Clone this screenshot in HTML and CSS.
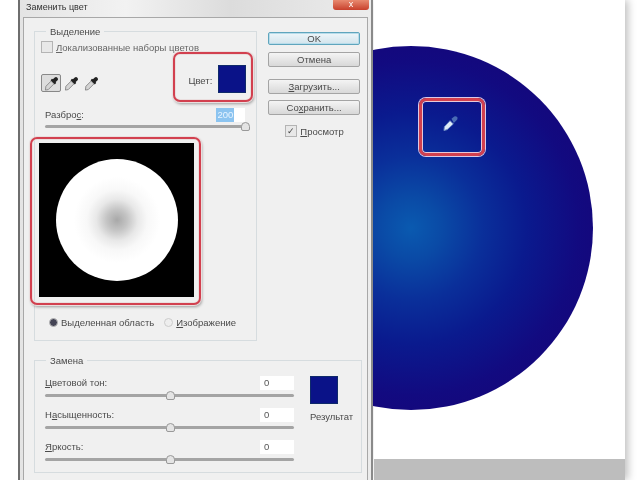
FILE: index.html
```html
<!DOCTYPE html>
<html lang="ru">
<head>
    <meta charset="UTF-8">
    <title>Заменить цвет</title>
    <link rel="stylesheet" href="styles.css">
</head>
<body>
    <svg width="0" height="0" class="defs">
        <symbol id="dropper" viewBox="0 0 16 16">
            <path d="M9.500 3.500L11.500 1.500Q13 0.500 14.500 2Q15.500 3.500 14.500 4.500L12.500 6.500L13 7.500L11.500 9L7 4.500L8.500 3z" fill="#222"/>
            <path d="M7.500 5.500L10.500 8.500L4.500 14.500L1.500 15L2 11z" fill="#d4d4d4" stroke="#888" stroke-width="1"/>
        </symbol>
        <symbol id="cursor-dropper" viewBox="0 0 16 16">
            <path d="M9 3L12 0.500Q14 0 15.500 1.500Q16 3.500 14 5L11.500 7.500z" fill="#4a6cb4"/>
            <path d="M7.500 5L11 8.500L4.500 14.500L1 15.500L1.500 11.500z" fill="#dfeaf6" stroke="#6f8fc8" stroke-width="1"/>
        </symbol>
    </svg>

    <div class="desktop">
        <div class="canvas">
            <div class="circle"></div>
            <div class="band"></div>
        </div>
        <svg class="cursor" width="15" height="15"><use href="#cursor-dropper"/></svg>
        <div class="callout callout-cursor"></div>

        <div class="dialog">
            <div class="titlebar">
                <span>Заменить цвет</span>
                <div class="close">x</div>
            </div>
            <div class="panel">
                <div class="top">
                    <fieldset class="group group-select">
                        <legend>Выделение</legend>
                        <label class="check check-local"><i class="box"></i><span><u>Л</u>окализованные наборы цветов</span></label>
                        <div class="tools">
                            <div class="droppers">
                                <div class="tool active"><svg width="15" height="15"><use href="#dropper"/></svg></div>
                                <div class="tool"><svg width="15" height="15"><use href="#dropper"/></svg></div>
                                <div class="tool"><svg width="15" height="15"><use href="#dropper"/></svg></div>
                            </div>
                            <div class="color">
                                <span>Цвет:</span>
                                <div class="swatch"></div>
                            </div>
                        </div>
                        <div class="field-row">
                            <span>Разбро<u>с</u>:</span>
                            <div class="value value-fuzz"><b>200</b></div>
                        </div>
                        <div class="slider"><i class="thumb" style="left:100%"></i></div>
                        <div class="preview"><div class="preview-circle"></div></div>
                        <div class="radios">
                            <label class="radio"><i class="dot on"></i><span>Выделенная область</span></label>
                            <label class="radio"><i class="dot"></i><span><u>И</u>зображение</span></label>
                        </div>
                    </fieldset>
                    <div class="buttons">
                        <div class="btn btn-default">OK</div>
                        <div class="btn">Отмена</div>
                        <div class="btn btn-gap"><u>З</u>агрузить...</div>
                        <div class="btn">Со<u>х</u>ранить...</div>
                        <label class="check check-preview"><i class="box box-on">✓</i><span><u>П</u>росмотр</span></label>
                    </div>
                </div>
                <fieldset class="group group-replace">
                    <legend>Замена</legend>
                    <div class="replace">
                        <div class="sliders">
                            <div class="field-row"><span><u>Ц</u>ветовой тон:</span><div class="value">0</div></div>
                            <div class="slider"><i class="thumb" style="left:50%"></i></div>
                            <div class="field-row"><span>Н<u>а</u>сыщенность:</span><div class="value">0</div></div>
                            <div class="slider"><i class="thumb" style="left:50%"></i></div>
                            <div class="field-row"><span><u>Я</u>ркость:</span><div class="value">0</div></div>
                            <div class="slider"><i class="thumb" style="left:50%"></i></div>
                        </div>
                        <div class="result">
                            <div class="swatch"></div>
                            <span>Результат</span>
                        </div>
                    </div>
                </fieldset>
            </div>
        </div>

        <div class="callout callout-color"></div>
        <div class="callout callout-preview"></div>
    </div>
</body>
</html>
```

FILE: styles.css
```css
html, body {
    margin: 0;
    height: 100%;
    overflow: hidden;
    background: #fff;
}

.defs {
    position: absolute;
}

.desktop {
    position: relative;
    width: 640px;
    height: 480px;
    overflow: hidden;
    font-family: "Liberation Sans", Arial, sans-serif;
    font-size: 9.5px;
    color: #4a4a4a;
    filter: blur(0.5px);
}

/* document behind the dialog */
.canvas {
    position: absolute;
    left: 374px;
    top: 0;
    width: 251px;
    height: 480px;
    background: #fff;
    box-shadow: 3px 0 8px rgba(0,0,0,0.25);
}

.circle {
    position: absolute;
    left: -145px;
    top: 46px;
    width: 364px;
    height: 364px;
    border-radius: 50%;
    background: radial-gradient(circle at 50% 50%, #0a5ab0 0%, #0a4aa6 12%, #0a2f9a 28%, #0a1a8e 45%, #120a80 65%, #1a0070 100%);
}

.band {
    position: absolute;
    left: 0;
    right: 0;
    bottom: 0;
    height: 21px;
    background: #bdbdbd;
}

.cursor {
    position: absolute;
    left: 443px;
    top: 116px;
}

/* red frames drawn over the screenshot */
.callout {
    position: absolute;
    box-sizing: border-box;
    border: 2px solid #d2404f;
    border-radius: 7px;
    box-shadow: 0 0 0 1px #eadede, inset 0 0 0 1px #eadede, 1px 2px 3px rgba(0,0,0,0.35);
}

.callout-color {
    left: 173px;
    top: 52px;
    width: 80px;
    height: 50px;
}

.callout-preview {
    left: 30px;
    top: 137px;
    width: 171px;
    height: 168px;
}

.callout-cursor {
    left: 419px;
    top: 98px;
    width: 66px;
    height: 58px;
    border-width: 3px;
    box-shadow: 0 0 0 1px #d9c8e8, inset 0 0 0 1px #e8c8d8;
}

/* dialog */
.dialog {
    position: absolute;
    left: 18px;
    top: 0;
    width: 355px;
    height: 490px;
    box-sizing: border-box;
    border-left: 2px solid #6e6e6e;
    border-right: 2px solid #8a8a8a;
    background: linear-gradient(90deg, #e4e4e4, #f2f2f2 30%, #dcdcdc 60%, #ececec);
}

.titlebar {
    display: flex;
    justify-content: space-between;
    height: 17px;
    padding: 2px 2px 0 6px;
    box-sizing: border-box;
    font-size: 9px;
    color: #333;
    line-height: 11px;
}

.close {
    width: 36px;
    height: 10px;
    margin-top: -2px;
    background: linear-gradient(#e88a70, #c8402c);
    border-radius: 0 0 3px 3px;
    color: #fff;
    text-align: center;
    font-size: 9px;
    line-height: 9px;
}

.panel {
    margin: 0 3px;
    padding: 0 7px 0 10px;
    height: 473px;
    background: #f0f0f0;
    border: 1px solid #a8a8a8;
    border-bottom: 0;
    box-sizing: border-box;
}

.top {
    display: flex;
    align-items: flex-start;
}

.group {
    margin: 7px 0 0;
    padding: 0 11px 11px 10px;
    border: 1px solid #d6dcdf;
    box-sizing: border-box;
    min-width: 0;
}

.group legend {
    margin-left: 1px;
    padding: 0 4px;
    height: 13px;
    line-height: 13px;
}

.group-select {
    width: 224px;
    height: 316px;
}

.group-replace {
    width: 328px;
    height: 119px;
    margin-top: 13px;
}

.check {
    display: flex;
    align-items: center;
    gap: 3px;
    height: 12px;
    white-space: nowrap;
}

.check-local {
    margin: 3px 0 0 -4px;
    color: #666;
}

.box {
    width: 10px;
    height: 10px;
    flex: none;
    border: 1px solid #b4b4b4;
    background: #e8e8e8;
    font-style: normal;
    font-size: 9px;
    line-height: 10px;
    text-align: center;
    color: #444;
}

.tools {
    display: flex;
    justify-content: space-between;
    height: 28px;
    margin: 12px -4px 0 -4px;
}

.droppers {
    display: flex;
    align-items: flex-end;
    height: 22px;
    margin-top: 5px;
}

.tool {
    width: 20px;
    height: 18px;
    display: flex;
    align-items: center;
    justify-content: center;
    box-sizing: border-box;
}

.tool.active {
    background: #ddd;
    border: 1px solid #888;
    border-radius: 2px;
}

.color {
    display: flex;
    align-items: center;
    gap: 6px;
    margin-right: 3px;
}

.color span {
    margin-top: 2px;
}

.swatch {
    width: 28px;
    height: 28px;
    background: #0a1288;
    border: 1px solid #0f2a6a;
    box-sizing: border-box;
}

.field-row {
    display: flex;
    justify-content: space-between;
    align-items: center;
    height: 13px;
}

.group-select .field-row {
    margin-top: 15px;
}

.value {
    width: 34px;
    height: 14px;
    background: #fff;
    padding-left: 4px;
    box-sizing: border-box;
    line-height: 14px;
    color: #555;
}

.value-fuzz {
    width: 29px;
    padding-left: 0;
}

.value-fuzz b {
    display: inline-block;
    width: 18px;
    text-align: center;
    font-weight: normal;
    background: #8cc4f0;
    color: #e8f4ff;
}

.slider {
    position: relative;
    height: 12px;
    margin-bottom: 7px;
}

.slider::before {
    content: "";
    position: absolute;
    left: 0;
    right: 0;
    top: 5px;
    height: 3px;
    background: #a4a4a4;
    border-radius: 2px;
}

.thumb {
    position: absolute;
    top: 2px;
    width: 7px;
    height: 7px;
    margin-left: -4px;
    background: #e4e4e4;
    border: 1px solid #999;
    border-radius: 50% 50% 2px 2px;
}

.group-select .slider {
    margin: 0 0 10px;
}

.group-select .slider::before {
    top: 4px;
}

.group-select .thumb {
    top: 1px;
}

.preview {
    display: flex;
    align-items: center;
    justify-content: center;
    width: 155px;
    height: 154px;
    margin-left: -6px;
    background: #000;
}

.preview-circle {
    width: 122px;
    height: 122px;
    border-radius: 50%;
    background: radial-gradient(circle, #a8a8a8 0%, #c4c4c4 12%, #e8e8e8 24%, #f8f8f8 35%, #fff 50%, #fff 100%);
}

.radios {
    display: flex;
    gap: 10px;
    margin: 19px 0 0 4px;
}

.radio {
    display: flex;
    align-items: center;
    gap: 3px;
    height: 12px;
    white-space: nowrap;
}

.dot {
    width: 7px;
    height: 7px;
    flex: none;
    border-radius: 50%;
    background: #eee;
    border: 1px solid #ccc;
}

.dot.on {
    background: #445;
    border-color: #bbb;
}

.buttons {
    display: flex;
    flex-direction: column;
    width: 92px;
    margin: 14px 0 0 11px;
}

.btn {
    height: 13px;
    margin-bottom: 7px;
    border: 1px solid #a4a4a4;
    border-radius: 2px;
    background: linear-gradient(#f4f4f4, #d8d8d8);
    text-align: center;
    line-height: 13px;
}

.btn-default {
    height: 11px;
    line-height: 11px;
    border: 1px solid #5fa5bd;
    background: linear-gradient(#eef6fa, #d2e4ec);
    box-shadow: inset 0 0 0 1px #b8dcea;
}

.btn-gap {
    margin-top: 5px;
    margin-bottom: 6px;
}

.check-preview {
    margin: 3px 0 0 17px;
}

.replace {
    display: flex;
    margin-top: 9px;
}

.sliders {
    width: 249px;
    flex: none;
}

.result {
    margin-left: 16px;
    display: flex;
    flex-direction: column;
    gap: 7px;
    white-space: nowrap;
}
```
